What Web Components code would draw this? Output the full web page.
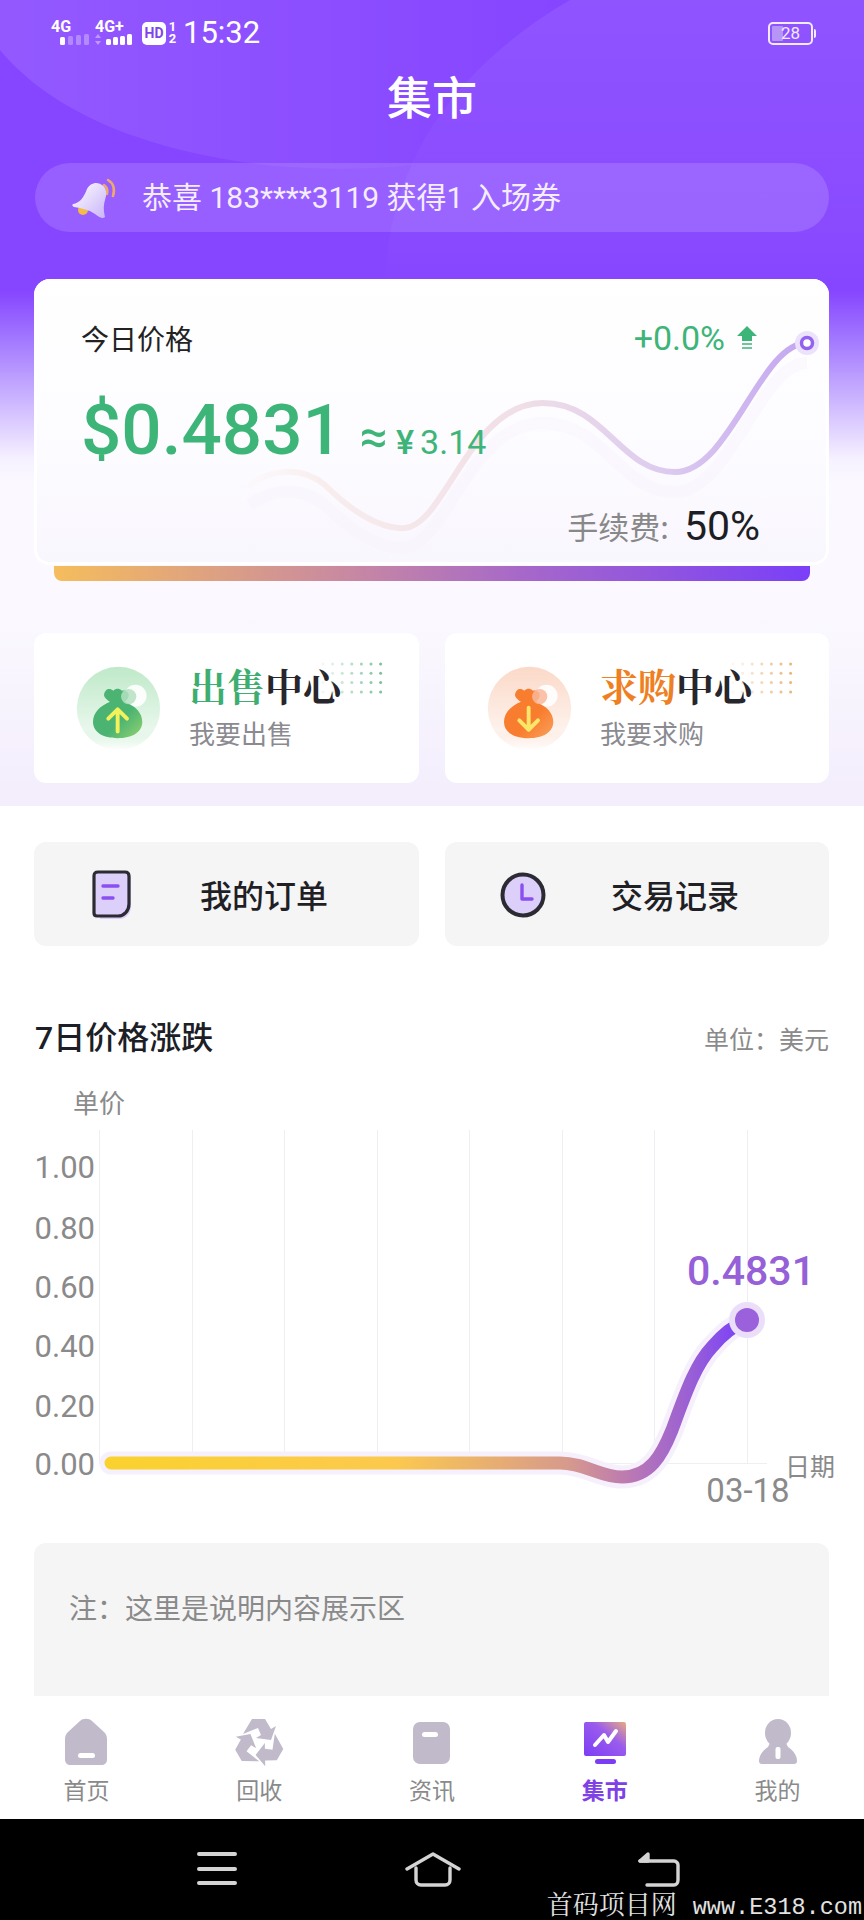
<!DOCTYPE html>
<html lang="zh-CN">
<head>
    <meta charset="UTF-8">
    <title>集市</title>
    <style>
        body {
            margin: 0;
            background: #fff;
            font-family: Roboto, "Noto Sans CJK SC", sans-serif;
        }
    </style>
</head>
<body>
    <market-page></market-page>

    <template id="market-page-tpl">
        <style>
            :host {
                display: flex;
                flex-direction: column;
                width: 864px;
                height: 1920px;
                overflow: hidden;
                background: #fff;
            }
            .hero {
                position: relative;
                height: 806px;
                flex: none;
                background: linear-gradient(180deg, #8645ff 0, #8645ff 36%, #a277ff 42%, #c8b0ff 49%, #f6f1ff 57%, #fbf9ff 60%, #fbf9ff 76%, #f3edfc 100%);
            }
            .hero > * { position: relative; }
            .hero > svg.shapes { position: absolute; left: 0; top: 0; }
            .row {
                display: grid;
                grid-template-columns: 385px 384px;
                gap: 26px;
                padding: 0 35px 0 34px;
            }
            .centers { margin-top: 52px; }
            .tiles { margin-top: 36px; }
            trend-head { margin-top: 72px; }
        </style>
        <div class="hero">
            <svg class="shapes" width="864" height="290" viewBox="0 0 864 290" aria-hidden="true">
                <defs>
                    <linearGradient id="sl" x1="0" y1="0" x2="1" y2="0">
                        <stop offset="0" stop-color="#fff" stop-opacity=".11"/>
                        <stop offset="1" stop-color="#fff" stop-opacity="0"/>
                    </linearGradient>
                    <linearGradient id="sr" x1="0" y1="0" x2="0" y2="1">
                        <stop offset="0" stop-color="#fff" stop-opacity=".08"/>
                        <stop offset=".8" stop-color="#fff" stop-opacity=".03"/>
                        <stop offset="1" stop-color="#fff" stop-opacity="0"/>
                    </linearGradient>
                </defs>
                <path d="M0 0V50C50 110 140 150 265 165C320 170 370 170 412 165C440 100 500 40 570 0Z" fill="url(#sl)"/>
                <path d="M570 0C450 70 385 170 385 290H864V0Z" fill="url(#sr)"/>
            </svg>
            <status-bar></status-bar>
            <page-title>集市</page-title>
            <notice-bar>恭喜 183****3119 获得1 入场券</notice-bar>
            <price-card></price-card>
            <div class="row centers">
                <center-link tone="green" lead="出售" sub="我要出售"></center-link>
                <center-link tone="orange" lead="求购" sub="我要求购"></center-link>
            </div>
        </div>
        <div class="row tiles">
            <action-tile icon="order">我的订单</action-tile>
            <action-tile icon="clock">交易记录</action-tile>
        </div>
        <trend-head></trend-head>
        <trend-chart></trend-chart>
        <note-box>注：这里是说明内容展示区</note-box>
        <tab-bar>
            <tab-item icon="home">首页</tab-item>
            <tab-item icon="recycle">回收</tab-item>
            <tab-item icon="news">资讯</tab-item>
            <tab-item icon="market" active>集市</tab-item>
            <tab-item icon="me">我的</tab-item>
        </tab-bar>
        <system-nav></system-nav>
    </template>

    <script>
        // every element gets its markup from a string, same little helper for all
        function shadow(el, html) {
            el.attachShadow({mode: 'open'}).innerHTML = html;
        }

        class MarketPage extends HTMLElement {
            constructor() {
                super();
                const tpl = document.getElementById('market-page-tpl');
                this.attachShadow({mode: 'open'}).append(tpl.content.cloneNode(true));
            }
        }

        class StatusBar extends HTMLElement {
            constructor() {
                super();
                shadow(this, `
                <style>
                    :host { display: flex; align-items: center; height: 60px; padding: 6px 51px 0 51px; box-sizing: border-box; color: #fff; }
                    .sig { position: relative; width: 38px; height: 26px; font: 700 16px/14px Roboto, sans-serif; }
                    .sig svg { position: absolute; left: 0; top: 14px; }
                    .sig.b { width: 40px; margin-left: 6px; }
                    .hd { margin-left: 7px; width: 24px; height: 23px; border-radius: 5px; background: #fff; color: #7f45e8; font: 700 14px/23px Roboto, sans-serif; text-align: center; }
                    .sim { margin-left: 1px; width: 11px; font: 700 13px/12px Roboto, sans-serif; text-align: center; }
                    .time { margin-left: 5px; font: 400 31px/36px Roboto, sans-serif; }
                    .batt { margin-left: auto; position: relative; width: 45px; height: 23px; border: 2px solid #f2eaff; border-radius: 5px; box-sizing: border-box; font: 400 17px/19px Roboto, sans-serif; text-align: center; color: #f2eaff; }
                    .batt i { position: absolute; left: 2px; top: 2px; bottom: 2px; width: 11px; background: #b795f7; border-radius: 1px; }
                    .batt b { position: relative; font-weight: 400; }
                    .batt:after { content: ""; position: absolute; right: -5px; top: 5px; width: 2px; height: 9px; background: #f2eaff; border-radius: 0 2px 2px 0; }
                </style>
                <div class="sig">4G
                    <svg width="38" height="12" viewBox="0 0 38 12">
                        <rect x="9" y="3" width="5" height="8" rx="1.5" fill="#fff"/>
                        <rect x="17" y="2" width="5" height="9" rx="1.5" fill="#fff" fill-opacity=".3"/>
                        <rect x="25" y="1" width="5" height="10" rx="1.5" fill="#fff" fill-opacity=".3"/>
                        <rect x="33" y="0" width="5" height="11" rx="1.5" fill="#fff" fill-opacity=".3"/>
                    </svg>
                </div>
                <div class="sig b">4G+
                    <svg width="40" height="12" viewBox="0 0 40 12">
                        <path d="M3 0l3 4H0zM3 11l3-4H0z" fill="#fff" fill-opacity=".4"/>
                        <rect x="11" y="5" width="5" height="6" rx="1.5" fill="#fff"/>
                        <rect x="18" y="3" width="5" height="8" rx="1.5" fill="#fff"/>
                        <rect x="25" y="2" width="5" height="9" rx="1.5" fill="#fff"/>
                        <rect x="32" y="0" width="5" height="11" rx="1.5" fill="#fff"/>
                    </svg>
                </div>
                <div class="hd">HD</div>
                <div class="sim">1<br>2</div>
                <div class="time">15:32</div>
                <div class="batt"><i></i><b>28</b></div>`);
            }
        }

        class PageTitle extends HTMLElement {
            constructor() {
                super();
                shadow(this, `
                <style>
                    :host { display: block; height: 84px; font: 500 45px/71px "Noto Sans CJK SC", sans-serif; color: #fff; text-align: center; }
                </style>
                <slot></slot>`);
            }
        }

        class NoticeBar extends HTMLElement {
            constructor() {
                super();
                shadow(this, `
                <style>
                    :host { display: flex; align-items: center; margin: 19px 35px 0 35px; height: 69px; border-radius: 35px; background: rgba(255,255,255,.14); color: #f4edff; font: 400 30px/40px Roboto, "Noto Sans CJK SC", sans-serif; }
                    svg { margin-left: 36px; margin-right: 24px; flex: none; }
                </style>
                <svg width="47" height="42" viewBox="0 0 47 42">
                    <defs><linearGradient id="bell" x1="0" y1="0" x2="1" y2="1"><stop offset="0" stop-color="#fff"/><stop offset="1" stop-color="#c9b4f8"/></linearGradient></defs>
                    <path d="M37 3c5 3 7 9 5 16" fill="none" stroke="#f0a968" stroke-width="2.6" stroke-linecap="round"/>
                    <path d="M33 8c3 2 4 5 3 9" fill="none" stroke="#f0a968" stroke-width="2.6" stroke-linecap="round"/>
                    <circle cx="12" cy="33" r="5" fill="#f6bb45"/>
                    <path d="M2 27c7-1 11-7 14-15 3-6 10-8 15-4 5 3 5 9 3 15-2 7-1 12 0 17-2 2-5 1-10-3-6-4-13-6-21-7-2-1-2-2-1-3z" fill="url(#bell)"/>
                </svg>
                <span><slot></slot></span>`);
            }
        }

        class PriceCard extends HTMLElement {
            constructor() {
                super();
                shadow(this, `
                <style>
                    :host { display: block; position: relative; margin: 47px 35px 0 34px; }
                    .card { position: relative; height: 286px; box-sizing: border-box; padding: 40px 69px 0 47px; border-radius: 16px; background: linear-gradient(180deg, #fff 0, #fdfcff 50%, #f9f7fe 100%); box-shadow: inset 0 -3px 0 #fff, inset 3px 0 0 #fff, inset -3px 0 0 #fff; overflow: hidden; }
                    .curve { position: absolute; left: 0; top: 0; }
                    .line { position: relative; display: flex; justify-content: space-between; align-items: center; }
                    .today { font: 400 28px/38px "Noto Sans CJK SC", sans-serif; color: #222; }
                    .change { display: flex; align-items: center; gap: 12px; margin-right: 3px; font: 400 34px/38px Roboto, sans-serif; color: #3eb578; }
                    .price { position: relative; display: flex; align-items: baseline; margin-top: 35px; height: 76px; color: #3eb578; }
                    .big { font: 500 71px/76px Roboto, sans-serif; }
                    .cny { margin-left: 17px; font: 400 34px/40px Roboto, sans-serif; white-space: nowrap; }
                    .cny i { font-style: normal; font-size: 50px; line-height: 40px; margin-right: 8px; }
                    .cny u { text-decoration: none; font-weight: 500; margin-right: 6px; }
                    .fee { position: relative; display: flex; justify-content: flex-end; align-items: center; margin-top: 38px; height: 40px; font: 400 31px/40px "Noto Sans CJK SC", sans-serif; color: #888; }
                    .fee b { margin-left: 15px; font: 400 41px/44px Roboto, sans-serif; color: #1d1d24; }
                    .foot { height: 15px; margin: 1px 19px 0 20px; border-radius: 0 0 8px 8px; background: linear-gradient(90deg, #f5bd5c 0, #c98aa0 38%, #a668c9 62%, #7a3ff8 100%); }
                </style>
                <div class="card">
                    <svg class="curve" width="795" height="286" viewBox="0 0 795 286" aria-hidden="true">
                        <defs>
                            <linearGradient id="cv" gradientUnits="userSpaceOnUse" x1="200" y1="0" x2="773" y2="0">
                                <stop offset="0" stop-color="#fbf1ee" stop-opacity="0"/>
                                <stop offset=".15" stop-color="#f8eeee"/>
                                <stop offset=".5" stop-color="#f0dfe6"/>
                                <stop offset=".75" stop-color="#dccbef"/>
                                <stop offset="1" stop-color="#c3a6f0"/>
                            </linearGradient>
                        </defs>
                        <path d="M216 226C236 211 266 206 291 226C316 251 346 271 371 269C411 266 436 144 509 144C571 144 586 213 641 213C696 213 726 84 773 84" fill="none" stroke="#f5f1fc" stroke-opacity=".35" stroke-width="12"/>
                        <path d="M216 206C236 191 266 186 291 206C316 231 346 251 371 249C411 246 436 124 509 124C571 124 586 193 641 193C696 193 726 64 773 64" fill="none" stroke="url(#cv)" stroke-width="6" stroke-linecap="round"/>
                        <circle cx="773" cy="64" r="12" fill="#ece2fb"/>
                        <circle cx="773" cy="64" r="5.5" fill="#fff" stroke="#9163ee" stroke-width="3.5"/>
                    </svg>
                    <div class="line">
                        <span class="today">今日价格</span>
                        <span class="change">+0.0%
                            <svg width="20" height="24" viewBox="0 0 20 24"><path d="M10 0L20 10H15V15H5V10H0Z" fill="#3eb578"/><path d="M5 18H15M5 22H15" stroke="#3eb578" stroke-width="1.6"/></svg>
                        </span>
                    </div>
                    <div class="price"><span class="big">$0.4831</span><span class="cny"><i>≈</i><u>¥</u>3.14</span></div>
                    <div class="fee">手续费:<b>50%</b></div>
                </div>
                <div class="foot"></div>`);
            }
        }

        class CenterLink extends HTMLElement {
            constructor() {
                super();
                const orange = this.getAttribute('tone') === 'orange';
                const id = orange ? 'o' : 'g';
                const c = orange
                    ? {lead: '#ee7f22', top: '#fbd9c8', bagA: '#f97d2e', bagB: '#f8a25e', arrow: '#fbe66a', dot: '#e9b272', knot: '#f9b79a'}
                    : {lead: '#3eae70', top: '#bfe9c9', bagA: '#4bb473', bagB: '#93d26e', arrow: '#f4f25b', dot: '#74bd93', knot: '#b5e0c2'};
                // arrow up for selling, down for buying
                const arrow = orange ? 'M49 49V75M38 64L49 75L60 64' : 'M49 77V51M38 62L49 51L60 62';
                let dots = '';
                for (let r = 0; r < 4; r++) {
                    for (let k = 0; k < 7; k++) {
                        dots += `<circle cx="${2 + k * 9.6}" cy="${2 + r * 9.3}" r="1.5" fill="${c.dot}" fill-opacity="${(0.1 + k * 0.14).toFixed(2)}"/>`;
                    }
                }
                shadow(this, `
                <style>
                    :host { display: flex; position: relative; align-items: center; height: 150px; box-sizing: border-box; padding-left: 42px; background: #fff; border-radius: 12px; }
                    .icon { flex: none; width: 85px; height: 85px; margin-right: 28px; }
                    .txt { position: relative; }
                    .name { margin-top: -3px; font: 700 38px/44px "Noto Serif CJK SC", "Source Han Serif SC", "AR PL UMing CN", "Noto Sans CJK SC", serif; color: #26262c; white-space: nowrap; }
                    .name em { font-style: normal; color: ${c.lead}; }
                    .sub { margin-top: 9px; font: 400 26px/34px "Noto Sans CJK SC", sans-serif; color: #8a8a90; }
                    .dots { position: absolute; right: 34px; top: 29px; }
                </style>
                <svg class="icon" viewBox="0 0 100 100" aria-hidden="true">
                    <defs>
                        <linearGradient id="disc${id}" x1="0" y1="0" x2="0" y2="1"><stop offset="0" stop-color="${c.top}"/><stop offset=".75" stop-color="${c.top}" stop-opacity=".35"/><stop offset="1" stop-color="#fff"/></linearGradient>
                        <linearGradient id="bag${id}" x1="0" y1="0" x2="1" y2="1"><stop offset="0" stop-color="${c.bagA}"/><stop offset=".6" stop-color="${c.bagA}"/><stop offset="1" stop-color="${c.bagB}"/></linearGradient>
                    </defs>
                    <circle cx="50" cy="50" r="49" fill="url(#disc${id})"/>
                    <circle cx="70" cy="35" r="13" fill="#fff" fill-opacity=".9"/>
                    <path d="M35 29c3-3 6-2 9 0 3-3 7-3 10 0 3-1 8 1 8 5 0 3-2 6-5 8 13 5 21 13 21 24 0 12-12 19-29 19S20 78 20 66c0-11 8-19 20-24-3-2-7-5-7-8 0-2 1-4 2-5z" fill="url(#bag${id})"/>
                    <circle cx="62" cy="36" r="9" fill="${c.knot}" fill-opacity=".85"/>
                    <path d="${arrow}" fill="none" stroke="${c.arrow}" stroke-width="4.6" stroke-linecap="round" stroke-linejoin="round"/>
                </svg>
                <div class="txt">
                    <div class="name"><em>${this.getAttribute('lead')}</em>中心</div>
                    <div class="sub">${this.getAttribute('sub')}</div>
                </div>
                <svg class="dots" width="64" height="32" viewBox="0 0 64 32" aria-hidden="true">${dots}</svg>`);
            }
        }

        class ActionTile extends HTMLElement {
            constructor() {
                super();
                const icons = {
                    order: `<path d="M10 6H38C41 6 41 8 41 10V38C41 44 36 50 30 50H10Z" fill="#dccffa" transform="translate(1 0)"/>
                        <path d="M9 3H36C39 3 40 5 40 7V35C40 42 35 47 29 47H8C6 47 5 46 5 44V7C5 4 6 3 9 3Z" fill="#dccffa" stroke="#2c2b33" stroke-width="3.2"/>
                        <path d="M14 17H29M14 29H24" stroke="#8a4ff0" stroke-width="3.4" stroke-linecap="round"/>`,
                    clock: `<circle cx="23" cy="26" r="20.5" fill="#dccffa" stroke="#2c2b33" stroke-width="4"/>
                        <path d="M22 16V30H32" fill="none" stroke="#8a4ff0" stroke-width="3.4" stroke-linecap="round" stroke-linejoin="round"/>`
                };
                shadow(this, `
                <style>
                    :host { display: flex; align-items: center; height: 104px; box-sizing: border-box; padding: 0 0 1px 55px; background: #f5f5f6; border-radius: 12px; font: 500 32px/40px "Noto Sans CJK SC", sans-serif; color: #1f1f25; }
                    svg { flex: none; margin-right: 65px; }
                </style>
                <svg width="46" height="50" viewBox="0 0 46 50" aria-hidden="true">${icons[this.getAttribute('icon')]}</svg>
                <slot></slot>`);
            }
        }

        class TrendHead extends HTMLElement {
            constructor() {
                super();
                shadow(this, `
                <style>
                    :host { display: flex; justify-content: space-between; align-items: center; height: 40px; padding: 0 35px; }
                    h2 { margin: 0; font: 500 32px/42px Roboto, "Noto Sans CJK SC", sans-serif; color: #1c2026; }
                    span { font: 400 25px/40px "Noto Sans CJK SC", sans-serif; color: #8a8a8a; }
                </style>
                <h2>7日价格涨跌</h2><span>单位：美元</span>`);
            }
        }

        class TrendChart extends HTMLElement {
            constructor() {
                super();
                const gridX = [99, 192, 284, 377, 469, 562, 654, 747];
                const ticks = [['1.00', 1167], ['0.80', 1228], ['0.60', 1287], ['0.40', 1346], ['0.20', 1406], ['0.00', 1464]];
                const curve = 'M111 1463H560C585 1463 600 1477 622 1477C650 1477 662 1455 672 1430C685 1395 695 1365 712 1347C722 1335 735 1325 747 1320';
                shadow(this, `
                <style>
                    :host { display: block; height: 485px; flex: none; }
                    svg { display: block; }
                    text { font-family: Roboto, "Noto Sans CJK SC", sans-serif; fill: #8a8a8a; }
                </style>
                <svg width="864" height="485" viewBox="0 1058 864 485">
                    <defs>
                        <linearGradient id="tr" gradientUnits="userSpaceOnUse" x1="105" y1="0" x2="747" y2="0">
                            <stop offset="0" stop-color="#fad22e"/>
                            <stop offset=".45" stop-color="#fcc94e"/>
                            <stop offset=".72" stop-color="#d79a8c"/>
                            <stop offset=".81" stop-color="#bd7bb0"/>
                            <stop offset=".91" stop-color="#9a60d4"/>
                            <stop offset=".98" stop-color="#7f45f4"/>
                            <stop offset="1" stop-color="#7f45f4"/>
                        </linearGradient>
                    </defs>
                    <text x="73" y="1113" font-size="26">单价</text>
                    ${gridX.map(x => `<line x1="${x}.5" y1="1130" x2="${x}.5" y2="1463" stroke="#efeff2"/>`).join('')}
                    <line x1="99" y1="1463.5" x2="767" y2="1463.5" stroke="#efeff2"/>
                    ${ticks.map(t => `<text x="95" y="${t[1] + 11}" font-size="31" text-anchor="end">${t[0]}</text>`).join('')}
                    <path d="${curve}" fill="none" stroke="#f6f0fc" stroke-width="23" stroke-linecap="round"/>
                    <path d="${curve}" fill="none" stroke="url(#tr)" stroke-width="13" stroke-linecap="round"/>
                    <circle cx="747" cy="1320" r="18" fill="#eadef9"/>
                    <circle cx="747" cy="1320" r="12" fill="#9b61dc"/>
                    <text x="751" y="1285" font-size="41" font-weight="500" text-anchor="middle" style="fill:#9560d8">0.4831</text>
                    <text x="785" y="1476" font-size="25">日期</text>
                    <text x="748" y="1502" font-size="33" text-anchor="middle">03-18</text>
                </svg>`);
            }
        }

        class NoteBox extends HTMLElement {
            constructor() {
                super();
                shadow(this, `
                <style>
                    :host { display: block; flex: none; height: 153px; box-sizing: border-box; margin: 0 35px 0 34px; padding: 45px 36px 0 35px; background: #f5f5f6; border-radius: 12px 12px 0 0; font: 400 28px/38px "Noto Sans CJK SC", sans-serif; color: #8a8a8a; }
                </style>
                <slot></slot>`);
            }
        }

        class TabBar extends HTMLElement {
            constructor() {
                super();
                shadow(this, `
                <style>
                    :host { display: grid; grid-template-columns: repeat(5, 1fr); flex: none; height: 123px; background: #fff; }
                </style>
                <slot></slot>`);
            }
        }

        class TabItem extends HTMLElement {
            constructor() {
                super();
                const arrow = 'M-16 -9L-7 -24H6L12 -14L17 -17L12 -3L-3 -5L2 -8L-1 -15Z';
                const icons = {
                    home: `<path d="M19 3C22 0 28 0 31 3L43 14C45 16 46 18 46 21V41C46 45 44 47 40 47H10C6 47 4 45 4 41V21C4 18 5 16 7 14Z" fill="#c0bacb"/><rect x="17" y="35" width="17" height="5" rx="2.5" fill="#fff"/>`,
                    recycle: `<g transform="translate(25 25)" fill="#c0bacb"><path d="${arrow}"/><path d="${arrow}" transform="rotate(120)"/><path d="${arrow}" transform="rotate(240)"/></g>`,
                    news: `<rect x="6" y="4" width="37" height="42" rx="7" fill="#c0bacb"/><rect x="15" y="14" width="16" height="5" rx="2.5" fill="#fff"/>`,
                    market: `<defs><linearGradient id="mk" x1="0" y1="1" x2="1" y2="0"><stop offset="0" stop-color="#7c3cf6"/><stop offset=".6" stop-color="#9a5cec"/><stop offset="1" stop-color="#e8ab80"/></linearGradient></defs>
                        <rect x="4" y="4" width="42" height="34" rx="2" fill="url(#mk)"/>
                        <path d="M15 27L24 17L28 24L36 13" fill="none" stroke="#fff" stroke-width="4" stroke-linecap="round" stroke-linejoin="round"/>
                        <rect x="15" y="41" width="21" height="5" rx="2.5" fill="#7c3cf6"/>`,
                    me: `<ellipse cx="25" cy="15" rx="13" ry="14" fill="#c0bacb"/><path d="M17 25H33L35 29C41 33 44 38 44 43C44 45 43 46 41 46H9C7 46 6 45 6 43C6 38 9 33 15 29Z" fill="#c0bacb"/><rect x="22.5" y="29" width="5" height="12" rx="2" fill="#fff"/>`
                };
                const on = this.hasAttribute('active');
                shadow(this, `
                <style>
                    :host { display: flex; flex-direction: column; align-items: center; padding-top: 22px; font: ${on ? 700 : 400} 23px/30px "Noto Sans CJK SC", sans-serif; color: ${on ? '#7d41e6' : '#8a8a8a'}; }
                    svg { display: block; margin-bottom: 6px; }
                </style>
                <svg width="50" height="50" viewBox="0 0 50 50" aria-hidden="true">${icons[this.getAttribute('icon')]}</svg>
                <slot></slot>`);
            }
        }

        class SystemNav extends HTMLElement {
            constructor() {
                super();
                shadow(this, `
                <style>
                    :host { display: flex; position: relative; flex: none; height: 101px; box-sizing: border-box; padding: 33px 0 0 197px; background: #000; }
                    svg { display: block; flex: none; }
                    .home { margin-left: 168px; }
                    .back { margin-left: 177px; }
                    .mark { position: absolute; right: 2px; bottom: -3px; font: 400 26px/30px "Noto Serif CJK SC", "AR PL UMing CN", "Liberation Mono", "Noto Sans CJK SC", monospace; color: #e2e2e2; white-space: nowrap; }
                    .mark span { font: 400 23.5px/30px "Liberation Mono", monospace; margin-left: 16px; }
                </style>
                <svg width="40" height="34" viewBox="0 0 40 34" fill="none" stroke="#d4d4d4" stroke-width="4" stroke-linecap="round" aria-hidden="true">
                    <path d="M2 2H38M2 17H38M2 31H38"/>
                </svg>
                <svg class="home" width="56" height="36" viewBox="0 0 56 36" fill="none" stroke="#d4d4d4" stroke-width="3.4" stroke-linecap="round" stroke-linejoin="round" aria-hidden="true">
                    <path d="M2 17L28 2L54 17"/>
                    <path d="M11 16V28C11 31 13 33 16 33H40C43 33 45 31 45 28V16"/>
                </svg>
                <svg class="back" width="42" height="36" viewBox="0 0 42 36" fill="none" stroke="#d4d4d4" stroke-width="3.4" stroke-linecap="round" stroke-linejoin="round" aria-hidden="true">
                    <path d="M2 9H36C38 9 40 11 40 13V28C40 31 38 33 36 33H9"/>
                    <path d="M10 2L2 9L10 9Z" fill="#d4d4d4"/>
                </svg>
                <div class="mark">首码项目网<span>www.E318.com</span></div>`);
            }
        }

        customElements.define('status-bar', StatusBar);
        customElements.define('page-title', PageTitle);
        customElements.define('notice-bar', NoticeBar);
        customElements.define('price-card', PriceCard);
        customElements.define('center-link', CenterLink);
        customElements.define('action-tile', ActionTile);
        customElements.define('trend-head', TrendHead);
        customElements.define('trend-chart', TrendChart);
        customElements.define('note-box', NoteBox);
        customElements.define('tab-bar', TabBar);
        customElements.define('tab-item', TabItem);
        customElements.define('system-nav', SystemNav);
        customElements.define('market-page', MarketPage);
    </script>
</body>
</html>
